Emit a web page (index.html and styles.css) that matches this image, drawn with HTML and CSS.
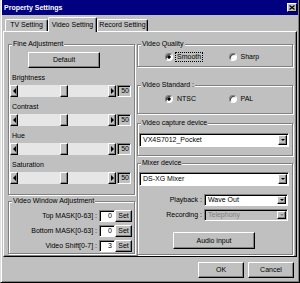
FILE: index.html
```html
<!DOCTYPE html>
<html lang="en">
<head>
    <meta charset="UTF-8">
    <meta name="viewport" content="width=device-width, initial-scale=1.0">
    <title>Property Settings</title>
    <link rel="stylesheet" href="styles.css">
</head>
<body>
    <div class="window">
        <div class="titlebar">
            <span class="title">Property Settings</span>
            <span class="close"><svg width="6" height="5" viewBox="0 0 6 5"><path d="M0.5 0.5L5.5 4.5M5.5 0.5L0.5 4.5" stroke="#000" stroke-width="1.2" fill="none"/></svg></span>
        </div>

        <div class="tabs">
            <div class="tab tab-tv">TV Setting</div>
            <div class="tab tab-video active">Video Setting</div>
            <div class="tab tab-record">Record Setting</div>
        </div>

        <div class="panel">
            <div class="col col-left">
                <fieldset class="group group-fine">
                    <legend>Fine Adjustment</legend>
                    <button class="btn btn-default">Default</button>

                    <div class="adjust-label">Brightness</div>
                    <div class="slider-row">
                        <span class="arrow arrow-left"></span>
                        <span class="track"><span class="thumb"></span></span>
                        <span class="arrow arrow-right"></span>
                        <span class="value">50</span>
                    </div>

                    <div class="adjust-label">Contrast</div>
                    <div class="slider-row">
                        <span class="arrow arrow-left"></span>
                        <span class="track"><span class="thumb"></span></span>
                        <span class="arrow arrow-right"></span>
                        <span class="value">50</span>
                    </div>

                    <div class="adjust-label">Hue</div>
                    <div class="slider-row">
                        <span class="arrow arrow-left"></span>
                        <span class="track"><span class="thumb"></span></span>
                        <span class="arrow arrow-right"></span>
                        <span class="value">50</span>
                    </div>

                    <div class="adjust-label">Saturation</div>
                    <div class="slider-row">
                        <span class="arrow arrow-left"></span>
                        <span class="track"><span class="thumb"></span></span>
                        <span class="arrow arrow-right"></span>
                        <span class="value">50</span>
                    </div>
                </fieldset>

                <fieldset class="group group-window">
                    <legend>Video Window Adjustment</legend>
                    <div class="mask-row">
                        <span class="mask-label">Top MASK[0-63] :</span>
                        <span class="num">0</span>
                        <button class="btn btn-set">Set</button>
                    </div>
                    <div class="mask-row">
                        <span class="mask-label">Bottom MASK[0-63] :</span>
                        <span class="num">0</span>
                        <button class="btn btn-set">Set</button>
                    </div>
                    <div class="mask-row">
                        <span class="mask-label">Video Shift[0-7] :</span>
                        <span class="num">3</span>
                        <button class="btn btn-set">Set</button>
                    </div>
                </fieldset>
            </div>

            <div class="col col-right">
                <fieldset class="group group-quality">
                    <legend>Video Quality</legend>
                    <div class="radio-row">
                        <span class="radio-item"><span class="radio checked"></span><span class="radio-text focus">Smooth</span></span>
                        <span class="radio-item"><span class="radio"></span><span class="radio-text">Sharp</span></span>
                    </div>
                </fieldset>

                <fieldset class="group group-standard">
                    <legend>Video Standard :</legend>
                    <div class="radio-row">
                        <span class="radio-item"><span class="radio checked"></span><span class="radio-text">NTSC</span></span>
                        <span class="radio-item"><span class="radio"></span><span class="radio-text">PAL</span></span>
                    </div>
                </fieldset>

                <fieldset class="group group-capture">
                    <legend>Video capture device</legend>
                    <div class="combo combo-wide"><span class="combo-text">VX4S7012_Pocket</span><span class="drop"></span></div>
                </fieldset>

                <fieldset class="group group-mixer">
                    <legend>Mixer device</legend>
                    <div class="combo combo-wide"><span class="combo-text">DS-XG Mixer</span><span class="drop"></span></div>
                    <div class="mix-row mix-playback">
                        <span class="mix-label">Playback :</span>
                        <div class="combo combo-small"><span class="combo-text">Wave Out</span><span class="drop"></span></div>
                    </div>
                    <div class="mix-row mix-recording">
                        <span class="mix-label">Recording :</span>
                        <div class="combo combo-small disabled"><span class="combo-text">Telephony</span><span class="drop"></span></div>
                    </div>
                    <button class="btn btn-audio">Audio input</button>
                </fieldset>
            </div>
        </div>

        <div class="footer">
            <button class="btn btn-footer">OK</button>
            <button class="btn btn-footer">Cancel</button>
        </div>
    </div>
</body>
</html>
```

FILE: styles.css
```css
* {
    box-sizing: border-box;
}
body {
    margin: 0;
    font-family: "Liberation Sans", Arial, sans-serif;
    font-size: 7px;
    line-height: 8px;
    color: #000;
    background: #c0c0c0;
    overflow: hidden;
}
.window {
    width: 300px;
    height: 283px;
    background: #c0c0c0;
    padding: 0 1px 1px;
    border-left: 1px solid #dfdfdf;
    border-right: 1px solid #000;
    border-bottom: 1px solid #000;
    box-shadow: inset 1px 0 #fff, inset -1px -1px #808080;
}
.titlebar {
    height: 15px;
    background: #000080;
    color: #fff;
    display: flex;
    align-items: center;
    justify-content: space-between;
    padding-left: 2px;
    padding-right: 1px;
}
.title {
    font-weight: bold;
    line-height: 15px;
}
.close {
    width: 10px;
    height: 9px;
    background: #c0c0c0;
    border: 1px solid;
    border-color: #fff #000 #000 #fff;
    display: flex;
    align-items: center;
    justify-content: center;
}

/* tabs */
.tabs {
    height: 16px;
    display: flex;
    align-items: flex-end;
    padding-left: 3px;
}
.tab {
    height: 12px;
    text-align: center;
    line-height: 10px;
    background: #c0c0c0;
    border: 1px solid;
    border-bottom: none;
    border-color: #fff #000 #000 #fff;
    border-radius: 2px 2px 0 0;
    box-shadow: inset -1px 0 #808080;
}
.tab-tv { width: 43px; }
.tab-video { width: 49px; }
.tab-record { width: 51px; }
.tab.active {
    height: 15px;
    margin-bottom: -1px;
    padding-top: 2px;
    line-height: 9px;
    position: relative;
    z-index: 1;
}

/* panel */
.panel {
    height: 226px;
    margin: 0 1px;
    border: 1px solid;
    border-color: #fff #000 #000 #fff;
    box-shadow: inset -1px -1px #808080;
    padding: 8px 0 0 4px;
    display: flex;
    align-items: flex-start;
    gap: 2px;
}
.col {
    display: flex;
    flex-direction: column;
}
.col-left { width: 127px; }
.col-right { width: 156px; }

.group {
    margin: 0;
    padding: 0;
    min-width: 0;
    border: 1px solid #808080;
    box-shadow: 1px 1px 0 #fff, inset 1px 1px 0 #fff;
}
.group legend {
    margin-left: 3px;
    padding: 0 1px;
    height: 8px;
    line-height: 8px;
    background: #c0c0c0;
}

.btn {
    display: block;
    font-family: inherit;
    font-size: 7px;
    line-height: 8px;
    color: #000;
    padding: 0;
    background: #c0c0c0;
    border: 1px solid;
    border-color: #fff #000 #000 #fff;
    box-shadow: inset -1px -1px #808080;
}

/* fine adjustment */
.group-fine { height: 155px; }
.btn-default {
    width: 72px;
    height: 16px;
    margin: 4px 0 0 19px;
}
.adjust-label {
    margin-top: 6px;
    padding-left: 3px;
}
.slider-row {
    display: flex;
    height: 12px;
    margin: 3px 0 0 1px;
}
.arrow {
    width: 8px;
    height: 12px;
    background: #c0c0c0;
    border: 1px solid;
    border-color: #fff #000 #000 #fff;
    box-shadow: inset -1px -1px #808080;
    display: flex;
    align-items: center;
    justify-content: center;
}
.arrow-left::after {
    content: "";
    border-top: 3px solid transparent;
    border-bottom: 3px solid transparent;
    border-right: 3px solid #000;
}
.arrow-right::after {
    content: "";
    border-top: 3px solid transparent;
    border-bottom: 3px solid transparent;
    border-left: 3px solid #000;
}
.track {
    width: 90px;
    height: 12px;
    background: #e6e6e6;
}
.thumb {
    display: block;
    width: 8px;
    height: 12px;
    margin-left: 42px;
    background: #c0c0c0;
    border: 1px solid;
    border-color: #fff #000 #000 #fff;
    box-shadow: inset -1px -1px #808080;
}
.value {
    width: 14px;
    height: 12px;
    margin-left: 1px;
    border: 1px solid;
    border-color: #808080 #fff #fff #808080;
    box-shadow: inset 1px 1px #000;
    text-align: right;
    padding-right: 1px;
    line-height: 10px;
}

/* video window */
.group-window {
    height: 57px;
    margin-top: 2px;
}
.mask-row {
    display: flex;
    justify-content: flex-end;
    align-items: center;
    height: 12px;
    margin-top: 3px;
    padding-right: 2px;
}
.mask-row:first-of-type { margin-top: 5px; }
.mask-label { margin-right: 2px; }
.num {
    width: 16px;
    height: 12px;
    background: #fff;
    border: 1px solid;
    border-color: #808080 #fff #fff #808080;
    box-shadow: inset 1px 1px #000;
    text-align: right;
    padding-right: 2px;
    line-height: 10px;
}
.btn-set {
    width: 17px;
    height: 12px;
}

/* right column */
.group-quality { height: 27px; }
.group-standard { height: 33px; margin-top: 14px; }
.group-capture { height: 37px; margin-top: 5px; }
.group-mixer { height: 96px; margin-top: 3px; }

.radio-row {
    display: flex;
    height: 10px;
    align-items: center;
    padding-left: 27px;
}
.group-quality .radio-row { margin-top: 4px; }
.group-standard .radio-row { margin-top: 5px; }
.radio-item {
    width: 72px;
    display: flex;
    align-items: center;
}
.radio {
    width: 8px;
    height: 8px;
    border-radius: 50%;
    background: #fff;
    border: 1px solid;
    border-color: #808080 #fff #fff #808080;
    box-shadow: inset 1px 1px #404040;
}
.radio.checked {
    background: radial-gradient(circle, #000 1.4px, #fff 1.9px);
}
.radio-text {
    margin-left: 2px;
    padding: 0 1px;
    line-height: 8px;
    border: 1px dotted transparent;
}
.radio-text.focus {
    border-color: #000;
}

.combo {
    display: flex;
    height: 14px;
    background: #fff;
    border: 1px solid;
    border-color: #808080 #fff #fff #808080;
    box-shadow: inset 1px 1px #000;
    padding: 1px 1px 1px 1px;
}
.combo-wide {
    width: 150px;
    margin-left: 1px;
}
.group-capture .combo { margin-top: 6px; }
.group-mixer .combo-wide { margin-top: 5px; }
.combo-small {
    width: 84px;
    height: 12px;
}
.combo-text {
    flex: 1;
    padding-left: 2px;
    line-height: 10px;
    white-space: nowrap;
    overflow: hidden;
}
.combo-small .combo-text { line-height: 8px; }
.combo.disabled {
    background: #c0c0c0;
    color: #808080;
}
.drop {
    width: 9px;
    background: #c0c0c0;
    border: 1px solid;
    border-color: #fff #000 #000 #fff;
    box-shadow: inset -1px -1px #808080;
    display: flex;
    align-items: center;
    justify-content: center;
}
.drop::after {
    content: "";
    border-left: 2px solid transparent;
    border-right: 2px solid transparent;
    border-top: 2px solid #000;
}
.combo.disabled .drop::after {
    border-top-color: #808080;
}
.mix-row {
    display: flex;
    justify-content: flex-end;
    align-items: center;
    padding-right: 4px;
}
.mix-playback { margin-top: 8px; }
.mix-recording { margin-top: 3px; }
.mix-label { margin-right: 2px; }
.btn-audio {
    width: 82px;
    height: 17px;
    margin: 11px 0 0 35px;
}

/* footer */
.footer {
    display: flex;
    justify-content: flex-end;
    gap: 4px;
    margin-top: 5px;
    padding-right: 4px;
}
.btn-footer {
    width: 46px;
    height: 16px;
}
```
